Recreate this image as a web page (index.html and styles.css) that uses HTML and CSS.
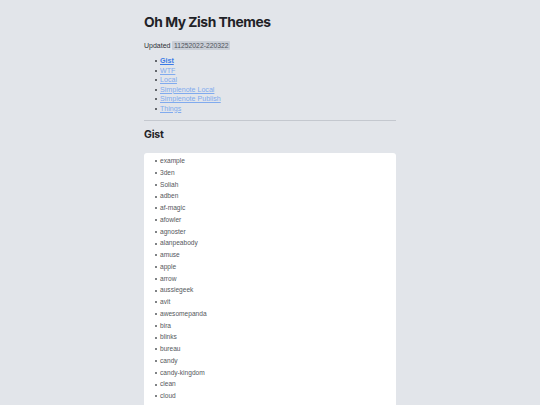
FILE: index.html
```html
<!DOCTYPE html>
<html lang="en">
<head>
<meta charset="utf-8">
<title>Oh My Zish Themes</title>
<link rel="stylesheet" href="styles.css">
</head>
<body>
<main class="page">
  <h1 class="title">Oh My Zish Themes</h1>
  <p class="updated">Updated <code class="stamp">11252022-220322</code></p>
  <ul class="nav">
    <li><a class="nav-link active" href="#gist">Gist</a></li>
    <li><a class="nav-link" href="#wtf">WTF</a></li>
    <li><a class="nav-link" href="#local">Local</a></li>
    <li><a class="nav-link" href="#sn-local">Simplenote Local</a></li>
    <li><a class="nav-link" href="#sn-publish">Simplenote Publish</a></li>
    <li><a class="nav-link" href="#things">Things</a></li>
  </ul>
  <hr class="rule">
  <h2 class="section-title" id="gist">Gist</h2>
  <div class="card">
    <ul class="themes">
      <li>example</li>
      <li>3den</li>
      <li>Soliah</li>
      <li>adben</li>
      <li>af-magic</li>
      <li>afowler</li>
      <li>agnoster</li>
      <li>alanpeabody</li>
      <li>amuse</li>
      <li>apple</li>
      <li>arrow</li>
      <li>aussiegeek</li>
      <li>avit</li>
      <li>awesomepanda</li>
      <li>bira</li>
      <li>blinks</li>
      <li>bureau</li>
      <li>candy</li>
      <li>candy-kingdom</li>
      <li>clean</li>
      <li>cloud</li>
    </ul>
  </div>
</main>
</body>
</html>
```

FILE: styles.css
```css
* { box-sizing: border-box; }
html, body {
  margin: 0;
  padding: 0;
  background: #e2e5ea;
  font-family: "Liberation Sans", Arial, sans-serif;
  color: #24272c;
  overflow: hidden;
}
.page {
  width: 252px;
  margin: 0 auto;
  padding-top: 12px;
}
.title {
  margin: 0;
  font-family: Inter, "Liberation Sans", sans-serif;
  font-size: 13.8px;
  letter-spacing: -0.45px;
  line-height: 20px;
  font-weight: 700;
  color: #1f2227;
}
.updated {
  margin: 9px 0 0;
  font-size: 7px;
  line-height: 10px;
  color: #2e3238;
}
.stamp {
  font-family: "Liberation Sans", Arial, sans-serif;
  font-size: 6.8px;
  background: #c9ced6;
  color: #4f545c;
  padding: 1px 1.5px;
  border-radius: 1px;
}
.nav,
.themes {
  list-style: none;
  margin: 0;
  padding-left: 16px;
}
.nav li::before,
.themes li::before {
  content: "";
  display: inline-block;
  width: 2px;
  height: 2px;
  border-radius: 50%;
  background: #3a3d42;
  margin: 0 3.5px 0 -5.5px;
  vertical-align: middle;
}
.nav {
  margin-top: 6px;
  font-size: 7.1px;
  line-height: 9.5px;
}
.nav-link {
  color: #80aaee;
  text-decoration: underline;
}
.nav-link.active {
  color: #3b7ae6;
  font-weight: 700;
}
.rule {
  margin: 6px 0 0;
  border: 0;
  height: 1px;
  background: #c4c8cf;
}
.section-title {
  margin: 7px 0 0;
  font-family: Inter, "Liberation Sans", sans-serif;
  font-size: 10.5px;
  letter-spacing: -0.2px;
  line-height: 14px;
  font-weight: 700;
  color: #1f2227;
}
.card {
  margin-top: 11px;
  background: #ffffff;
  border-radius: 3px;
  padding: 2px 0 10px;
}
.themes {
  font-size: 6.6px;
  line-height: 11.75px;
  color: #55585d;
}
.themes li::before {
  background: #55585d;
}
```
